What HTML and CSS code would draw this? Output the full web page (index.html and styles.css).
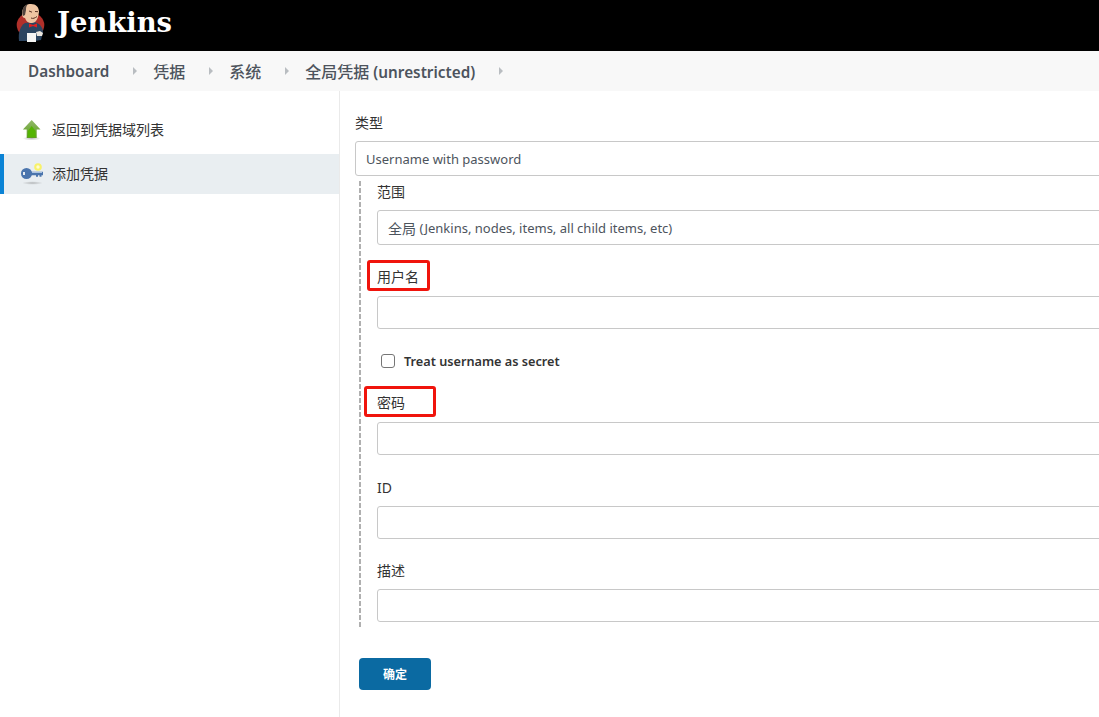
FILE: index.html
```html
<!DOCTYPE html>
<html lang="zh">
<head>
<meta charset="utf-8">
<title>Jenkins</title>
<link rel="stylesheet" href="styles.css">
</head>
<body>
<header class="topbar">
  <svg class="logo" viewBox="0 0 32 42" width="32" height="42" aria-hidden="true">
    <ellipse cx="15.5" cy="22" rx="13.8" ry="12.5" fill="#b0302a"/>
    <path d="M4 38c-1-8 1-15 6-18l9-1c5 1 9 5 9 10l-2 8-6 1H8z" fill="#2c4560"/>
    <path d="M8 6c1-3 4-5 8-5 5 0 8 3 8 8l-1 5c-1 3-3 6-6 6-4 0-6-2-7-5-2 0-3-2-3-4 0-2 0-3 1-5z" fill="#eec5a2"/>
    <path d="M8 6c0-2 2-4 5-5-2 2-2 4-2 6l-1 5-2 1c-1-2-1-5 0-7z" fill="#51443e"/>
    <path d="M14 8l3 1.2M20 8.500l3 .2M16 15c2 1 4 0 6-1.500" stroke="#5a3527" stroke-width="1" fill="none"/>
    <path d="M14 20.500l4 1.500 4-1.500v4l-4-1.500-4 1.500z" fill="#e3201f"/>
    <path d="M12 30h9v9h-9z" fill="#f5f5f3"/>
    <path d="M21 29l4-1 3 2-1 3-5 0z" fill="#ece7df"/>
  </svg>
  <span class="brand">Jenkins</span>
</header>

<nav class="crumbs">
  <a class="crumb">Dashboard</a><i class="sep"></i>
  <a class="crumb crumb-cjk">凭据</a><i class="sep"></i>
  <a class="crumb crumb-cjk">系统</a><i class="sep"></i>
  <a class="crumb"><span class="crumb-cjk">全局凭据</span> (unrestricted)</a><i class="sep"></i>
</nav>

<div class="page">
  <aside class="side">
    <a class="task">
      <svg class="task-icon" viewBox="0 0 24 24" width="24" height="24" aria-hidden="true">
        <defs>
          <linearGradient id="up" x1="0" y1="0" x2="0" y2="1">
            <stop offset="0" stop-color="#92b96a"/>
            <stop offset="1" stop-color="#5d9d1e"/>
          </linearGradient>
          <radialGradient id="shade">
            <stop offset="0" stop-color="#bdbdbd"/>
            <stop offset="1" stop-color="#ffffff"/>
          </radialGradient>
        </defs>
        <ellipse cx="11.700" cy="20.500" rx="9" ry="2" fill="url(#shade)"/>
        <path d="M11.700 2l8.800 9.500h-3.800V20H6.700v-8.500H2.900z" fill="url(#up)"/>
        <path d="M11.700 8l3.800 5v6H7.900v-6z" fill="#54b402"/>
      </svg>
      <span class="task-text">返回到凭据域列表</span>
    </a>
    <a class="task task-active">
      <svg class="task-icon" viewBox="0 0 24 24" width="24" height="24" aria-hidden="true">
        <defs>
          <radialGradient id="shade2">
            <stop offset="0" stop-color="#b4b7b9"/>
            <stop offset="1" stop-color="#e9eef1"/>
          </radialGradient>
        </defs>
        <ellipse cx="12.500" cy="21" rx="10.500" ry="1.800" fill="url(#shade2)"/>
        <circle cx="18" cy="5" r="3.800" fill="#f8f26a"/>
        <circle cx="18" cy="5" r="1.700" fill="#fffbd0"/>
        <circle cx="6.500" cy="11.500" r="5.500" fill="#4b75ad"/>
        <path d="M11 9.800h12v3.500h-1.500v1.500h-2v-1.500h-1.500v1.500h-2v-1.500H11z" fill="#4b75ad"/>
        <path d="M12 10.500h10" stroke="#a9c2e0" stroke-width="1"/>
        <rect x="3" y="10" width="2" height="3" fill="#e8edf2"/>
      </svg>
      <span class="task-text">添加凭据</span>
    </a>
  </aside>

  <main class="main">
    <form class="form">
      <div class="label">类型</div>
      <div class="control control-select">Username with password</div>
      <div class="nested">
        <div class="field">
          <div class="label">范围</div>
          <div class="control control-select"><span class="cjk">全局</span>&nbsp;(Jenkins, nodes, items, all child items, etc)</div>
        </div>
        <div class="field">
          <div class="label label-wide">用户名</div>
          <div class="control"></div>
        </div>
        <label class="check">
          <span class="box"></span>
          <span>Treat username as secret</span>
        </label>
        <div class="field field-loose">
          <div class="label label-wide">密码</div>
          <div class="control"></div>
        </div>
        <div class="field field-loose">
          <div class="label">ID</div>
          <div class="control"></div>
        </div>
        <div class="field">
          <div class="label">描述</div>
          <div class="control"></div>
        </div>
      </div>
      <button class="submit" type="button">确定</button>
    </form>
    <div class="mark mark-user"></div>
    <div class="mark mark-pass"></div>
  </main>
</div>
</body>
</html>
```
FILE: styles.css
```css
* { box-sizing: border-box; }
html, body { height: 100%; }
body {
  margin: 0;
  overflow: hidden;
  background: #fff;
  color: #333;
  font-family: "Noto Sans", "Noto Sans CJK SC", sans-serif;
  font-size: 13px;
}
.topbar {
  display: flex;
  align-items: center;
  height: 51px;
  padding: 0 0 7px 15px;
  background: #000;
}
.logo { display: block; align-self: flex-start; margin-top: 3px; }
.brand {
  margin-left: 10px;
  color: #fff;
  font-family: "DejaVu Serif", serif;
  font-size: 27.400px;
  font-weight: 700;
}
.crumbs {
  display: flex;
  align-items: center;
  height: 40px;
  padding-left: 28px;
  background: #f8f8f8;
}
.crumb {
  color: #4d545d;
  font-size: 15.300px;
  font-weight: 600;
}
.crumb-cjk { font-size: 16px; font-weight: 500; }
.sep {
  width: 0;
  height: 0;
  margin: 0 16.500px 0 23.500px;
  border-left: 4px solid #b9bdc1;
  border-top: 4px solid transparent;
  border-bottom: 4px solid transparent;
}
.page {
  display: flex;
  height: 626px;
}
.side {
  flex: none;
  width: 340px;
  padding-top: 19px;
  border-right: 1px solid #eaeaea;
}
.task {
  display: flex;
  align-items: center;
  height: 40px;
  padding-left: 20px;
  margin-bottom: 4px;
  color: #333;
}
.task-icon { flex: none; margin-right: 8px; }
.task-text { padding-bottom: 1px; font-size: 14px; line-height: 18px; }
.task-active {
  background: #e9eef1;
  box-shadow: inset 4px 0 0 #0b83d5;
}
.main {
  position: relative;
  flex: 1;
  min-width: 0;
  overflow: hidden;
  padding: 23px 0 0 15px;
}
.form { width: 800px; }
.label {
  height: 18px;
  margin-bottom: 9px;
  font-size: 14px;
  line-height: 18px;
  color: #333;
}
.label-wide { margin-bottom: 10px; }
.cjk { font-size: 14px; }
.control {
  height: 33px;
  border: 1px solid #c8c8c8;
  border-radius: 3px;
  background: #fff;
}
.control-select {
  display: flex;
  align-items: center;
  height: 35px;
  padding-left: 10px;
  color: #4d545d;
}
.nested {
  display: flex;
  flex-direction: column;
  gap: 23px;
  margin: 5px 0 0 4px;
  padding: 2px 0 6px 18px;
  background: repeating-linear-gradient(to bottom, #b0b0b0 0 5px, transparent 5px 7px) left top / 2px 100% no-repeat;
}
.field-loose { margin-top: 1px; }
.check {
  display: flex;
  align-items: center;
  height: 18px;
  padding-left: 4px;
  color: #333;
  font-size: 12.700px;
  font-weight: 600;
}
.box {
  width: 14px;
  height: 14px;
  margin-right: 9px;
  border: 1px solid #767676;
  border-radius: 3px;
  background: #fff;
}
.submit {
  display: block;
  width: 72px;
  height: 32px;
  margin: 30px 0 0 4px;
  padding: 0;
  border: 0;
  border-radius: 4px;
  background: #0b6aa2;
  color: #fff;
  font-family: inherit;
  font-size: 12px;
  font-weight: 700;
}
.mark {
  position: absolute;
  border: 3px solid #f0140c;
  border-radius: 3px;
}
.mark-user { left: 27px; top: 169px; width: 63px; height: 31px; }
.mark-pass { left: 24px; top: 295px; width: 72px; height: 31px; }
```
